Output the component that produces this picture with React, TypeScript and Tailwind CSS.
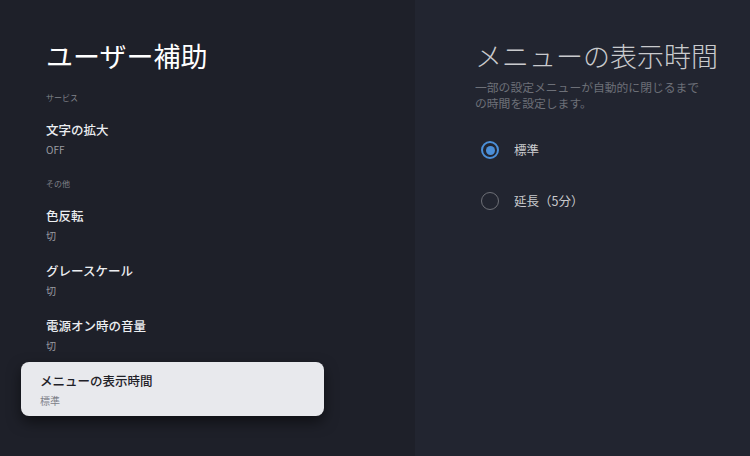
import React from "react";

const font = { fontFamily: '"Noto Sans CJK JP", "Noto Sans", sans-serif' };

function Header({ text, className = "" }: { text: string; className?: string }) {
  return (
    <div className={`h-[16px] text-[8px] leading-[16px] text-[#80838a] ${className}`}>{text}</div>
  );
}

function Item({ title, sub, className = "" }: { title: string; sub: string; className?: string }) {
  return (
    <div className={`flex flex-col ${className}`}>
      <div className="h-[20px] text-[12.5px] leading-[20px] font-medium text-[#eceef1]">{title}</div>
      <div className="h-[20px] text-[10px] leading-[20px] text-[#9a9ca2]">{sub}</div>
    </div>
  );
}

export default function App() {
  return (
    <div className="w-[750px] h-[456px] flex overflow-hidden" style={font}>
      <div className="w-[415px] h-full bg-[#1e2029] flex flex-col pt-[42px]">
        <div className="pl-[46px] h-[28px] text-[27px] leading-[28px] text-white font-normal">ユーザー補助</div>
        <div className="pl-[46px] flex flex-col">
          <Header text="サービス" className="mt-[20px]" />
          <Item title="文字の拡大" sub="OFF" className="mt-[14px]" />
          <Header text="その他" className="mt-[16px]" />
          <Item title="色反転" sub="切" className="mt-[14px]" />
          <Item title="グレースケール" sub="切" className="mt-[15px]" />
          <Item title="電源オン時の音量" sub="切" className="mt-[15px]" />
        </div>
        <div className="ml-[21px] mt-[6px] w-[303px] h-[54px] rounded-[8px] bg-[#e8e9ed] pl-[19px] pt-[9px] flex flex-col shadow-[0_6px_14px_rgba(0,0,0,0.5)]">
          <div className="h-[20px] text-[12.5px] leading-[20px] font-medium text-[#1f2128]">メニューの表示時間</div>
          <div className="h-[20px] text-[10px] leading-[20px] text-[#7d8088]">標準</div>
        </div>
      </div>
      <div className="flex-1 h-full bg-[#222530] flex flex-col pt-[42px] pl-[60px]">
        <div className="h-[28px] text-[27px] leading-[28px] font-light text-[#c9cacd] whitespace-nowrap">メニューの表示時間</div>
        <div className="mt-[9px] w-[235px] text-[11.8px] leading-[16px] text-[#6d7078]">
          一部の設定メニューが自動的に閉じるまでの時間を設定します。
        </div>
        <div className="mt-[29px] flex flex-col pl-[6px]">
          <div className="h-[20px] flex items-center">
            <div className="w-[18px] h-[18px] rounded-full border-[2px] border-[#4b8fd8] flex items-center justify-center">
              <div className="w-[9px] h-[9px] rounded-full bg-[#4b8fd8]" />
            </div>
            <span className="ml-[15px] text-[12.5px] text-[#c9cacd]">標準</span>
          </div>
          <div className="h-[20px] mt-[31px] flex items-center">
            <div className="w-[18px] h-[18px] rounded-full border-[1.5px] border-[#6e7077]" />
            <span className="ml-[15px] text-[12.5px] text-[#c9cacd]">延長（5分）</span>
          </div>
        </div>
      </div>
    </div>
  );
}
